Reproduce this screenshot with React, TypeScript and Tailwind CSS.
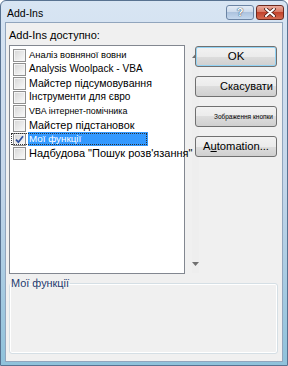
import React from "react";

const items = [
  { text: "Аналіз вовняної вовни", size: "text-[9.4px]" },
  { text: "Analysis Woolpack - VBA", size: "text-[10.1px]" },
  { text: "Майстер підсумовування", size: "text-[10.6px]" },
  { text: "Інструменти для євро", size: "text-[10.1px]" },
  { text: "VBA інтернет-помічника", size: "text-[8.9px]" },
  { text: "Майстер підстановок", size: "text-[10.8px]" },
  { text: "Мої функції", size: "text-[9.8px]", checked: true, selected: true },
  { text: "Надбудова \"Пошук розв'язання\"", size: "text-[11px]" },
];

function CheckBox({ checked }: { checked?: boolean }) {
  return (
    <span className="flex h-[13px] w-[13px] shrink-0 items-center justify-center border border-[#8f8f8f] bg-linear-to-br from-[#d6d6d6] to-[#fbfbfb] shadow-[inset_0_0_0_1px_#f5f5f5]">
      {checked && (
        <svg width="9" height="9" viewBox="0 0 9 9">
          <path d="M1 4.6 L3.4 7.2 L8 1.2" fill="none" stroke="#2d4f9e" strokeWidth="1.7" />
        </svg>
      )}
    </span>
  );
}

const btn =
  "flex h-[21px] w-[82px] items-center rounded-[3px] border border-[#707070] bg-[linear-gradient(#f2f2f2,#ebebeb_50%,#dddddd_50%,#cfcfcf)] text-black";

export default function App() {
  return (
    <div className="flex h-[366px] w-[288px] flex-col rounded-t-[6px] border border-[#587291] bg-linear-to-b from-[#d8e5f3] via-[#c4d6ea] to-[#8fc2db] font-['Liberation_Sans',Arial,sans-serif]">
      {/* title bar */}
      <div className="flex h-[21px] items-start pl-[6px] pr-[3px] pt-[4px]">
        <span className="mt-[2px] text-[10.5px] leading-[13px] text-black">Add-Ins</span>
        <div className="ml-auto flex gap-[2px]">
          <div className="flex h-[15px] w-[28px] items-center justify-center rounded-[3px] border border-[#6b84a4] bg-[linear-gradient(#e4ecf6,#cddbec_45%,#adc3de_50%,#c4d8ee)]">
            <span className="text-[11px] font-bold leading-[11px] text-white [text-shadow:0_0_1px_#23405f,0_0_1px_#23405f]">?</span>
          </div>
          <div className="flex h-[15px] w-[28px] items-center justify-center rounded-[3px] border border-[#6b2a20] bg-[linear-gradient(#eaab9d,#d97a65_45%,#c2432c_50%,#d46b51)]">
            <svg width="12" height="9" viewBox="0 0 12 9">
              <path d="M2 1 L10 8 M10 1 L2 8" stroke="#4a1a12" strokeWidth="3.6" strokeLinecap="round" />
              <path d="M2 1 L10 8 M10 1 L2 8" stroke="#ffffff" strokeWidth="2" strokeLinecap="round" />
            </svg>
          </div>
        </div>
      </div>

      {/* client area */}
      <div className="mx-[4px] mb-[3px] flex flex-1 flex-col border border-[#91a5bd] bg-[#f0f0f0] pl-[3px] pt-[6px]">
        <p className="text-[11px] leading-[13px] text-black">Add-Ins доступно:</p>

        <div className="mt-[3px] flex items-start gap-[10px]">
          {/* list box */}
          <div className="flex h-[229px] w-[176px] border border-[#828790] bg-white">
            <div className="flex flex-1 flex-col pt-[2px]">
              {items.map((it) => (
                <div
                  key={it.text}
                  className={
                    it.selected
                      ? "flex h-[14px] w-[138px] items-center pl-[3px] outline-1 -outline-offset-2 outline-dotted outline-[#333]"
                      : "flex h-[14px] items-center pl-[3px]"
                  }
                >
                  <CheckBox checked={it.checked} />
                  <span
                    className={
                      it.selected
                        ? `ml-[2px] h-[14px] w-[120px] bg-[#3399ff] pl-[1px] leading-[14px] whitespace-nowrap text-white ${it.size}`
                        : `relative z-10 ml-[2px] pl-[1px] leading-[14px] whitespace-nowrap text-black ${it.size}`
                    }
                  >
                    {it.text}
                  </span>
                </div>
              ))}
            </div>
            {/* scroll bar */}
            <div className="flex w-[17px] flex-col justify-between bg-[#eeeeee]">
              <div className="flex h-[20px] items-center justify-center">
                <svg width="7" height="4" viewBox="0 0 7 4">
                  <path d="M0 4 L3.5 0 L7 4 Z" fill="#707070" />
                </svg>
              </div>
              <div className="flex h-[19px] items-center justify-center">
                <svg width="7" height="4" viewBox="0 0 7 4">
                  <path d="M0 0 L3.5 4 L7 0 Z" fill="#707070" />
                </svg>
              </div>
            </div>
          </div>

          {/* buttons */}
          <div className="mt-[1px] flex flex-col gap-[9px]">
            <div className={`${btn} justify-center border-[#3c7fb1] shadow-[inset_0_0_0_1px_#93d3f4]`}>
              <span className="text-[11.5px]">OK</span>
            </div>
            <div className={`${btn} justify-end pr-[3px]`}>
              <span className="text-[11px]">Скасувати</span>
            </div>
            <div className={`${btn} justify-end pr-[3px]`}>
              <span className="text-[6.5px] leading-[8px] whitespace-nowrap">Зображення кнопки</span>
            </div>
            <div className={`${btn} justify-center`}>
              <span className="text-[11.2px]">
                A<span className="underline">u</span>tomation...
              </span>
            </div>
          </div>
        </div>

        {/* group box */}
        <fieldset className="mt-[3px] h-[77px] w-[269px] rounded-[3px] border border-[#d5dfe5] shadow-[inset_0_0_0_1px_#ffffff]">
          <legend className="px-[1px] text-[10.9px] leading-[13px] text-[#1e3a6e]">Мої функції</legend>
        </fieldset>
      </div>
    </div>
  );
}
